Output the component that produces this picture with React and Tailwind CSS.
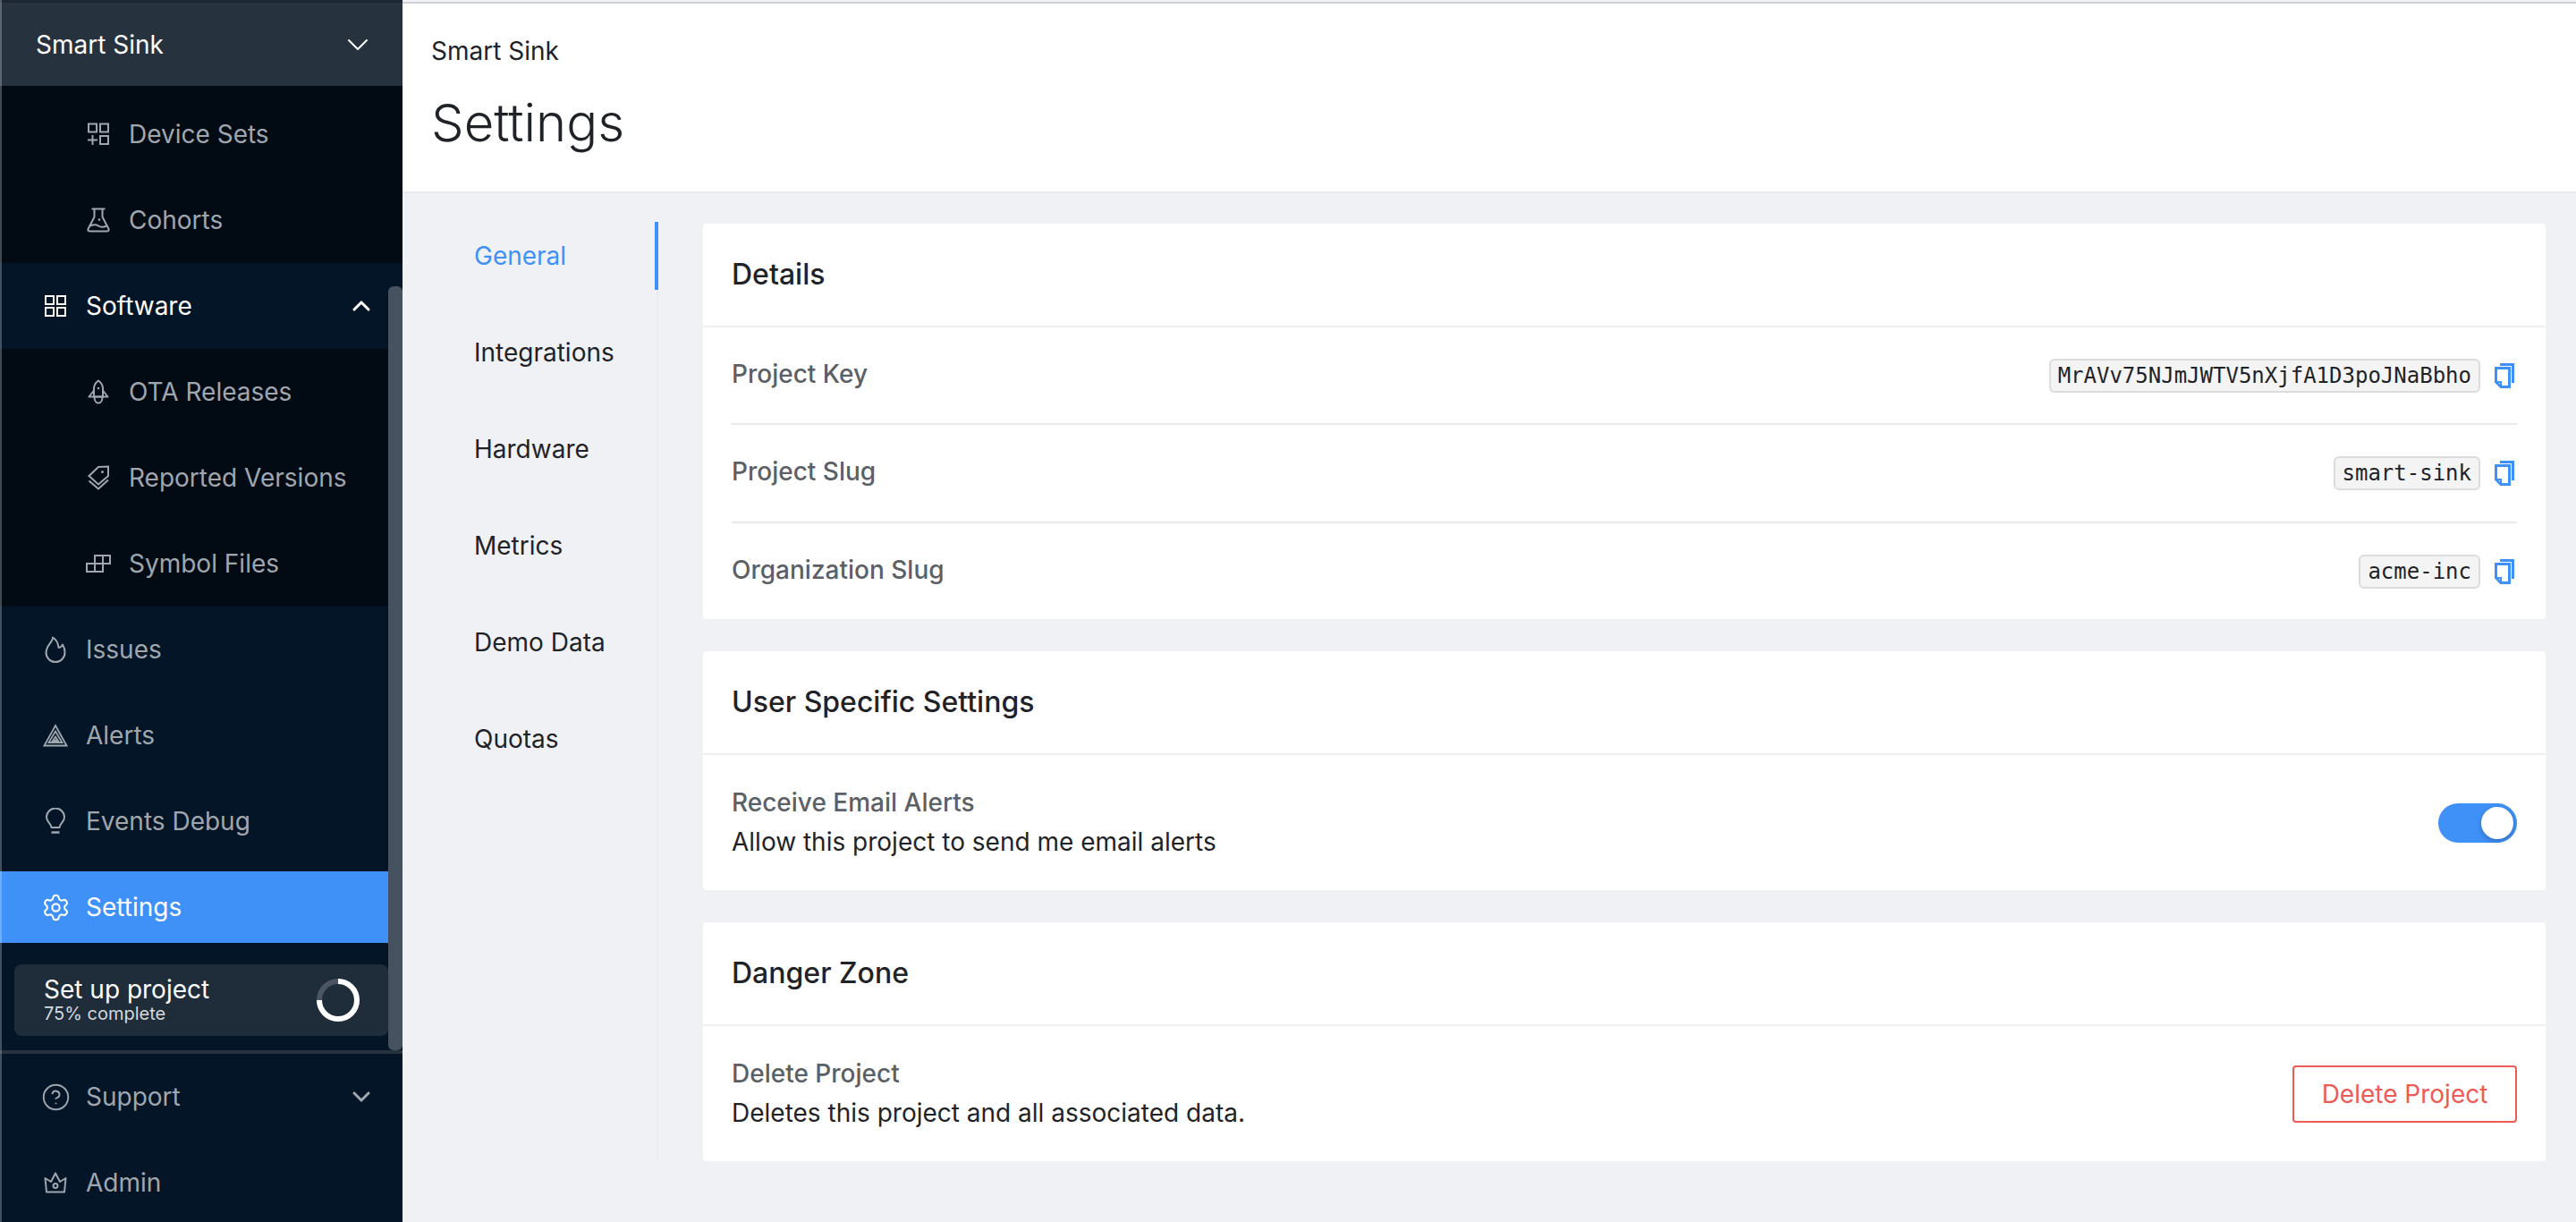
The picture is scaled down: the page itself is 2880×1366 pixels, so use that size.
import React from 'react'
import { ChevronDown, ChevronUp, Settings, CircleHelp } from 'lucide-react'

const FONT = 'font-["Inter","Liberation_Sans",sans-serif]'

function DeviceSetsIcon() {
  return (
    <svg width="26" height="26" viewBox="0 0 26 26" fill="none" stroke="currentColor" strokeWidth="2">
      <rect x="2" y="1.5" width="9" height="9" />
      <rect x="15" y="1.5" width="9" height="9" />
      <rect x="15" y="15" width="9" height="9" />
      <path d="M6.5 14v11M1 19.500h11" />
    </svg>
  )
}

function FlaskIcon() {
  return (
    <svg width="26" height="28" viewBox="0 0 26 28" fill="none" stroke="currentColor" strokeWidth="2" strokeLinejoin="round">
      <path d="M5.500 1.500h15" />
      <path d="M8.500 1.500v9L1.500 24c-.5 1.500.5 2.500 2 2.500h19c1.500 0 2.500-1 2-2.500L17.500 10.500v-9" />
      <path d="M4 20.500c4-2 6-2 9 0s5 2 9 0" />
      <circle cx="14" cy="13.500" r="1.300" fill="currentColor" stroke="none" />
    </svg>
  )
}

function SoftwareIcon() {
  return (
    <svg width="26" height="26" viewBox="0 0 26 26" fill="none" stroke="currentColor" strokeWidth="2">
      <rect x="2" y="2" width="9" height="9" />
      <rect x="15" y="2" width="9" height="9" />
      <rect x="2" y="15" width="9" height="9" />
      <rect x="15" y="15" width="9" height="9" />
    </svg>
  )
}

function RocketIcon() {
  return (
    <svg width="24" height="28" viewBox="0 0 24 28" fill="none" stroke="currentColor" strokeWidth="2" strokeLinejoin="round">
      <path d="M12 1.500c3.500 2.500 5 5.500 5 9v9H7v-9c0-3.500 1.500-6.500 5-9z" />
      <path d="M7 12.500l-5.500 7h21L17 12.500" />
      <path d="M7.500 20c0 4 2 6.500 4.500 6.500s4.500-2.500 4.500-6.500" />
      <circle cx="12" cy="10" r="1.300" fill="currentColor" stroke="none" />
    </svg>
  )
}

function TagsIcon() {
  return (
    <svg width="26" height="28" viewBox="0 0 26 28" fill="none" stroke="currentColor" strokeWidth="2" strokeLinejoin="miter">
      <path d="M13 2l11-.5v10.500L13 21.500 2.500 12z" />
      <path d="M2.500 17.500l10.500 9 11-10" />
      <circle cx="17.500" cy="7.500" r="1.500" fill="currentColor" stroke="none" />
    </svg>
  )
}

function SymbolFilesIcon() {
  return (
    <svg width="28" height="20" viewBox="0 0 28 20" fill="none" stroke="currentColor" strokeWidth="2">
      <rect x="1" y="10" width="9" height="9" />
      <rect x="10" y="10" width="9" height="9" />
      <rect x="10" y="1" width="9" height="9" />
      <rect x="19" y="1" width="8" height="9" />
    </svg>
  )
}

function FlameIcon() {
  return (
    <svg width="24" height="30" viewBox="0 0 24 30" fill="none" stroke="currentColor" strokeWidth="2" strokeLinejoin="round">
      <path d="M9 1.500C9 7 1.500 10.500 1.500 18.500a10.500 10.500 0 0 0 21 0c0-3.500-1-6.500-2.500-9-.8 2-2.500 3.500-4.500 3.500C15 8 13 4 9 1.500z" />
    </svg>
  )
}

function AlertsIcon() {
  return (
    <svg width="28" height="26" viewBox="0 0 28 26" fill="none" stroke="currentColor" strokeWidth="1.800" strokeLinejoin="miter">
      <path d="M14 2l12.500 22.500h-25z" />
      <path d="M14 8.500l7.500 12.500h-15z" />
      <path d="M14 14.500l3 4.500h-6z" fill="currentColor" fillOpacity="0.5" />
    </svg>
  )
}

function BulbIcon() {
  return (
    <svg width="22" height="30" viewBox="0 0 22 30" fill="none" stroke="currentColor" strokeWidth="2" strokeLinejoin="round">
      <path d="M6.500 22c0-4-5.500-6-5.500-11.500a10 10 0 0 1 20 0C21 16 15.500 18 15.500 22z" />
      <path d="M6.500 27.500h9" strokeWidth="2.500" />
    </svg>
  )
}

function CrownIcon() {
  return (
    <svg width="26" height="24" viewBox="0 0 26 24" fill="none" stroke="currentColor" strokeWidth="2" strokeLinejoin="round">
      <path d="M3 22.500L1.500 7 8 11l5-9.500L18 11l6.500-4L23 22.500z" />
      <circle cx="13" cy="15.500" r="2.500" />
    </svg>
  )
}

function CopyIcon() {
  return (
    <svg width="22" height="28" viewBox="0 0 22 28" fill="none" stroke="#3f91f8" strokeWidth="3">
      <path d="M6 1.500h14.500V22" />
      <path d="M1.500 5.500h15v21H7l-5.500-5.500z" />
      <path d="M1.500 21H7v5.500" strokeWidth="2" />
    </svg>
  )
}

function SetupRing() {
  return (
    <svg width="48" height="48" viewBox="0 0 48 48" fill="none" strokeWidth="6">
      <circle cx="24" cy="24" r="21" stroke="#4b5563" />
      <path d="M24 3a21 21 0 1 1-21 21" stroke="#ffffff" />
    </svg>
  )
}

function SideRow({ icon, label, active, sub, open, trailing }) {
  return (
    <div className="py-2">
      <div className={`flex items-center h-20 ${sub ? 'pl-[86px]' : 'pl-[38px]'} pr-[30px] ${active ? 'bg-[#3f91f8] text-white' : open ? 'text-white' : 'text-[#a0a6ae]'}`}>
        <span className="w-[48px] mr-[10px] flex items-center justify-center shrink-0">{icon}</span>
        <span className="text-[28px] leading-none flex-1">{label}</span>
        {trailing}
      </div>
    </div>
  )
}

function Sidebar() {
  return (
    <aside className="relative w-[450px] h-[1366px] shrink-0 overflow-hidden bg-[#031526]">
      <div className="flex items-center h-24 bg-[#26323e] border-t-[3px] border-[#1d2733] pl-[40px] pr-[30px] text-white">
        <span className="text-[28px] leading-none flex-1">Smart Sink</span>
        <ChevronDown size={40} strokeWidth={1.200} />
      </div>
      <div className="bg-[#020b14] pt-[6px]">
        <SideRow sub icon={<DeviceSetsIcon />} label="Device Sets" />
        <SideRow sub icon={<FlaskIcon />} label="Cohorts" />
      </div>
      <SideRow open icon={<SoftwareIcon />} label="Software" trailing={<ChevronUp size={32} strokeWidth={2.300} />} />
      <div className="bg-[#020b14]">
        <SideRow sub icon={<RocketIcon />} label="OTA Releases" />
        <SideRow sub icon={<TagsIcon />} label="Reported Versions" />
        <SideRow sub icon={<SymbolFilesIcon />} label="Symbol Files" />
      </div>
      <SideRow icon={<FlameIcon />} label="Issues" />
      <SideRow icon={<AlertsIcon />} label="Alerts" />
      <SideRow icon={<BulbIcon />} label="Events Debug" />
      <SideRow active icon={<Settings size={33} strokeWidth={1.500} />} label="Settings" />
      <div className="flex items-center h-20 mt-4 ml-4 mr-4 pl-[33px] pr-[32px] rounded-lg bg-[#1f2c3a] text-white">
        <div className="flex-1">
          <div className="text-[28px] leading-[30px]">Set up project</div>
          <div className="text-[20px] leading-[24px] text-[#d5d8dc]">75% complete</div>
        </div>
        <SetupRing />
      </div>
      <div className="mt-4 h-1 bg-[#26323e]" />
      <SideRow icon={<CircleHelp size={33} strokeWidth={1.400} />} label="Support" trailing={<ChevronDown size={32} strokeWidth={2.300} />} />
      <SideRow icon={<CrownIcon />} label="Admin" />
      {/* scrollbar + left edge sit over the rows */}
      <div className="absolute right-0 top-[320px] w-4 h-[854px] rounded-md bg-[#465260]" />
      <div className="absolute left-0 top-0 bottom-0 w-[2px] bg-white/25" />
    </aside>
  )
}

function NavItem({ label, active }) {
  return (
    <div className={`flex items-center h-[76px] -mr-[2px] pl-[80px] text-[28px] leading-none ${active ? 'text-[#3f91f8] border-r-4 border-[#3f91f8]' : 'text-[#1f2328]'}`}>
      {label}
    </div>
  )
}

function Card({ title, children }) {
  return (
    <section className="bg-white rounded-[4px]">
      <h2 className="flex items-center h-[114px] px-8 text-[32px] leading-none font-medium text-[#1f2328] border-b-2 border-[#f0f0f2] box-content">{title}</h2>
      {children}
    </section>
  )
}

function KeyRow({ label, value, className }) {
  return (
    <div className={`flex items-center justify-between mx-8 ${className}`}>
      <span className="pb-1 text-[28px] leading-none font-medium text-[#5b5f66]">{label}</span>
      <span className="flex items-center gap-4 mr-[3px]">
        <code className="px-[8px] h-[38px] flex items-center rounded-md bg-[#f4f4f4] border-2 border-[#dcdcdc] text-[24px] leading-none text-[#1f2328] font-['DejaVu_Sans_Mono',monospace]">{value}</code>
        <CopyIcon />
      </span>
    </div>
  )
}

function ActionRow({ title, text, children }) {
  return (
    <div className="flex items-center justify-between h-[151px] px-8">
      <div className="pb-[2px]">
        <div className="text-[28px] leading-[44px] font-medium text-[#5b5f66]">{title}</div>
        <div className="text-[28px] leading-[44px] text-[#1f2328]">{text}</div>
      </div>
      {children}
    </div>
  )
}

export default function App() {
  return (
    <div className={`flex h-[1366px] overflow-hidden bg-[#f0f1f5] ${FONT}`}>
      <Sidebar />
      <main className="flex-1 flex flex-col min-w-0">
        <header className="h-[214px] shrink-0 bg-white border-t-2 mt-[2px] border-b-2 border-t-[#cfcfd6] border-b-[#e8e9ed] pl-[32px]">
          <div className="pt-[36px] text-[28px] leading-[34px] text-[#1f2328]">Smart Sink</div>
          <h1 className="mt-[28px] text-[58px] leading-[70px] font-light text-[#1f2328]">Settings</h1>
        </header>
        <div className="flex items-stretch pt-8">
          <nav className="flex flex-col gap-8 w-[286px] shrink-0 border-r-2 border-[#ebecee]">
            <NavItem active label="General" />
            <NavItem label="Integrations" />
            <NavItem label="Hardware" />
            <NavItem label="Metrics" />
            <NavItem label="Demo Data" />
            <NavItem label="Quotas" />
          </nav>
          <div className="flex-1 flex flex-col gap-9 pt-[2px] pl-[50px] pr-[34px] min-w-0">
            <Card title="Details">
              <KeyRow className="h-[109px] border-b-2 border-[#e9e9eb]" label="Project Key" value="MrAVv75NJmJWTV5nXjfA1D3poJNaBbho" />
              <KeyRow className="h-[110px] border-b-2 border-[#e9e9eb]" label="Project Slug" value="smart-sink" />
              <KeyRow className="h-[107px]" label="Organization Slug" value="acme-inc" />
            </Card>
            <Card title="User Specific Settings">
              <ActionRow title="Receive Email Alerts" text="Allow this project to send me email alerts">
                <div className="flex justify-end items-center w-[88px] h-[44px] pr-1 rounded-full bg-[#3f91f8]">
                  <div className="w-9 h-9 rounded-full bg-white shadow-[0_2px_6px_rgba(0,0,0,0.25)]" />
                </div>
              </ActionRow>
            </Card>
            <Card title="Danger Zone">
              <ActionRow title="Delete Project" text="Deletes this project and all associated data.">
                <button className="w-[251px] h-16 rounded-[4px] border-2 border-[#ee5a55] text-[28px] leading-none text-[#ee5a55] bg-white">Delete Project</button>
              </ActionRow>
            </Card>
          </div>
        </div>
      </main>
    </div>
  )
}
